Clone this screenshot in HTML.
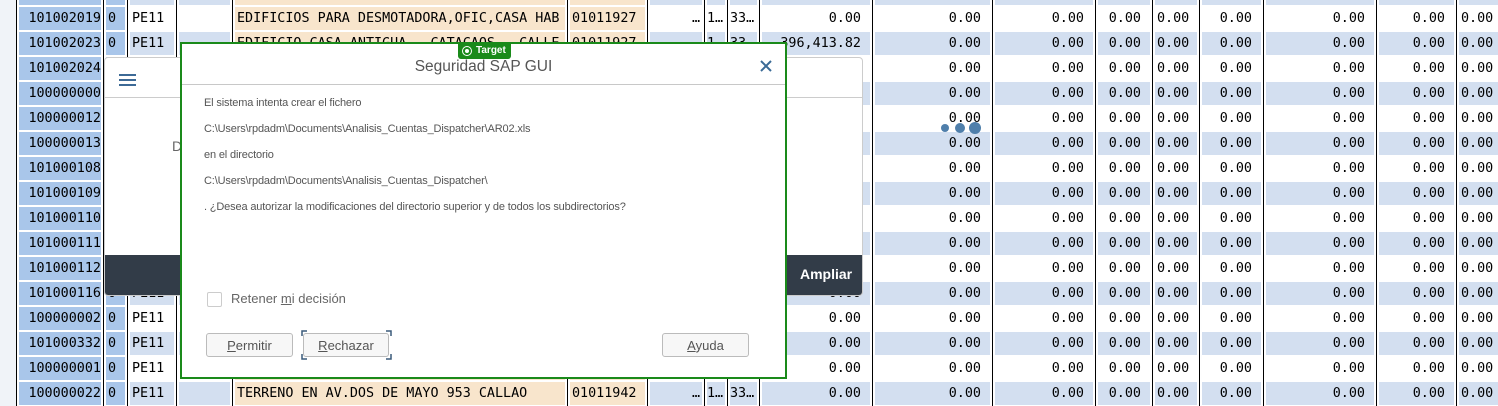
<!DOCTYPE html>
<html><head><meta charset="utf-8"><style>
body{margin:0;width:1498px;height:400px;overflow:hidden;background:#f0f3f8;position:relative;font-family:"DejaVu Sans Mono",monospace}
table{position:absolute;left:16px;top:-19px;width:1500px;border-collapse:separate;border-spacing:0;table-layout:fixed;font-size:13.4px;color:#000}
td{height:25px;padding:0 11px 0 4px;border-left:1px solid #000;box-shadow:inset 2px 0 #fff,inset -2px 0 #fff,inset 0 1px #fff,inset 0 -1px #fff;white-space:nowrap;overflow:hidden;text-align:right;background:#fff;box-sizing:border-box;line-height:25px}
tr.b td{background:#d3dff0}
td.i{background:#a9c6ea!important;text-align:right;padding-right:2px}
td.z{background:#a9c6ea!important;text-align:left;padding-left:4px}
td.o{background:#f8e5cc!important;text-align:left}
td.l{text-align:left;padding-right:2px}
td.d{padding-right:4px}
.abs{position:absolute}
.dlgt{font-family:"Liberation Sans",sans-serif;font-size:11px;color:#555;position:absolute;left:22px;letter-spacing:-0.15px;white-space:nowrap}
.btn{position:absolute;top:289px;height:24px;border:1px solid #bbb;border-radius:3px;background:#f7f7f7;font-family:"Liberation Sans",sans-serif;font-size:13px;color:#555;text-align:center;line-height:24px;box-sizing:border-box}
</style></head><body>
<table>
<colgroup><col style="width:87px"><col style="width:24px"><col style="width:49px"><col style="width:56px"><col style="width:335px"><col style="width:80px"><col style="width:57px"><col style="width:23px"><col style="width:32px"><col style="width:113px"><col style="width:120px"><col style="width:103px"><col style="width:57px"><col style="width:47px"><col style="width:64px"><col style="width:113px"><col style="width:80px"><col style="width:60px"></colgroup>
<tr class="b"><td class="i"></td><td class="z"></td><td class="l"></td><td></td><td class="o"></td><td class="o"></td><td></td><td></td><td></td><td></td><td></td><td></td><td></td><td></td><td></td><td></td><td></td><td></td></tr>
<tr><td class="i">101002019</td><td class="z">0</td><td class="l">PE11</td><td></td><td class="o">EDIFICIOS PARA DESMOTADORA,OFIC,CASA HAB</td><td class="o">01011927</td><td class="d">…</td><td class="l" style="padding:0 2px">1…</td><td class="l" style="padding:0 2px">33…</td><td>0.00</td><td>0.00</td><td>0.00</td><td>0.00</td><td class="l">0.00</td><td>0.00</td><td>0.00</td><td>0.00</td><td class="l">0.00</td></tr>
<tr class="b"><td class="i">101002023</td><td class="z">0</td><td class="l">PE11</td><td></td><td class="o">EDIFICIO CASA ANTIGUA - CATACAOS - CALLE</td><td class="o">01011927</td><td class="d">…</td><td class="l" style="padding:0 2px">1…</td><td class="l" style="padding:0 2px">33…</td><td>396,413.82</td><td>0.00</td><td>0.00</td><td>0.00</td><td class="l">0.00</td><td>0.00</td><td>0.00</td><td>0.00</td><td class="l">0.00</td></tr>
<tr><td class="i">101002024</td><td class="z">0</td><td class="l">PE11</td><td></td><td class="o"></td><td class="o"></td><td></td><td></td><td></td><td>0.00</td><td>0.00</td><td>0.00</td><td>0.00</td><td class="l">0.00</td><td>0.00</td><td>0.00</td><td>0.00</td><td class="l">0.00</td></tr>
<tr class="b"><td class="i">100000000</td><td class="z">0</td><td class="l">PE11</td><td></td><td class="o"></td><td class="o"></td><td></td><td></td><td></td><td>0.00</td><td>0.00</td><td>0.00</td><td>0.00</td><td class="l">0.00</td><td>0.00</td><td>0.00</td><td>0.00</td><td class="l">0.00</td></tr>
<tr><td class="i">100000012</td><td class="z">0</td><td class="l">PE11</td><td></td><td class="o"></td><td class="o"></td><td></td><td></td><td></td><td>0.00</td><td>0.00</td><td>0.00</td><td>0.00</td><td class="l">0.00</td><td>0.00</td><td>0.00</td><td>0.00</td><td class="l">0.00</td></tr>
<tr class="b"><td class="i">100000013</td><td class="z">0</td><td class="l">PE11</td><td></td><td class="o"></td><td class="o"></td><td></td><td></td><td></td><td>0.00</td><td>0.00</td><td>0.00</td><td>0.00</td><td class="l">0.00</td><td>0.00</td><td>0.00</td><td>0.00</td><td class="l">0.00</td></tr>
<tr><td class="i">101000108</td><td class="z">0</td><td class="l">PE11</td><td></td><td class="o"></td><td class="o"></td><td></td><td></td><td></td><td>0.00</td><td>0.00</td><td>0.00</td><td>0.00</td><td class="l">0.00</td><td>0.00</td><td>0.00</td><td>0.00</td><td class="l">0.00</td></tr>
<tr class="b"><td class="i">101000109</td><td class="z">0</td><td class="l">PE11</td><td></td><td class="o"></td><td class="o"></td><td></td><td></td><td></td><td>0.00</td><td>0.00</td><td>0.00</td><td>0.00</td><td class="l">0.00</td><td>0.00</td><td>0.00</td><td>0.00</td><td class="l">0.00</td></tr>
<tr><td class="i">101000110</td><td class="z">0</td><td class="l">PE11</td><td></td><td class="o"></td><td class="o"></td><td></td><td></td><td></td><td>0.00</td><td>0.00</td><td>0.00</td><td>0.00</td><td class="l">0.00</td><td>0.00</td><td>0.00</td><td>0.00</td><td class="l">0.00</td></tr>
<tr class="b"><td class="i">101000111</td><td class="z">0</td><td class="l">PE11</td><td></td><td class="o"></td><td class="o"></td><td></td><td></td><td></td><td>0.00</td><td>0.00</td><td>0.00</td><td>0.00</td><td class="l">0.00</td><td>0.00</td><td>0.00</td><td>0.00</td><td class="l">0.00</td></tr>
<tr><td class="i">101000112</td><td class="z">0</td><td class="l">PE11</td><td></td><td class="o"></td><td class="o"></td><td></td><td></td><td></td><td>0.00</td><td>0.00</td><td>0.00</td><td>0.00</td><td class="l">0.00</td><td>0.00</td><td>0.00</td><td>0.00</td><td class="l">0.00</td></tr>
<tr class="b"><td class="i">101000116</td><td class="z">0</td><td class="l">PE11</td><td></td><td class="o"></td><td class="o"></td><td></td><td></td><td></td><td>0.00</td><td>0.00</td><td>0.00</td><td>0.00</td><td class="l">0.00</td><td>0.00</td><td>0.00</td><td>0.00</td><td class="l">0.00</td></tr>
<tr><td class="i">100000002</td><td class="z">0</td><td class="l">PE11</td><td></td><td class="o"></td><td class="o"></td><td></td><td></td><td></td><td>0.00</td><td>0.00</td><td>0.00</td><td>0.00</td><td class="l">0.00</td><td>0.00</td><td>0.00</td><td>0.00</td><td class="l">0.00</td></tr>
<tr class="b"><td class="i">101000332</td><td class="z">0</td><td class="l">PE11</td><td></td><td class="o"></td><td class="o"></td><td></td><td></td><td></td><td>0.00</td><td>0.00</td><td>0.00</td><td>0.00</td><td class="l">0.00</td><td>0.00</td><td>0.00</td><td>0.00</td><td class="l">0.00</td></tr>
<tr><td class="i">100000001</td><td class="z">0</td><td class="l">PE11</td><td></td><td class="o"></td><td class="o"></td><td></td><td></td><td></td><td>0.00</td><td>0.00</td><td>0.00</td><td>0.00</td><td class="l">0.00</td><td>0.00</td><td>0.00</td><td>0.00</td><td class="l">0.00</td></tr>
<tr class="b"><td class="i">100000022</td><td class="z">0</td><td class="l">PE11</td><td></td><td class="o">TERRENO EN AV.DOS DE MAYO 953 CALLAO</td><td class="o">01011942</td><td class="d">…</td><td class="l" style="padding:0 2px">1…</td><td class="l" style="padding:0 2px">33…</td><td>0.00</td><td>0.00</td><td>0.00</td><td>0.00</td><td class="l">0.00</td><td>0.00</td><td>0.00</td><td>0.00</td><td class="l">0.00</td></tr>
</table>

<div class="abs" style="left:941px;top:124px;width:8px;height:8px;border-radius:50%;background:#4f7fab"></div>
<div class="abs" style="left:955px;top:123px;width:10px;height:10px;border-radius:50%;background:#4f7fab"></div>
<div class="abs" style="left:969px;top:122px;width:12px;height:12px;border-radius:50%;background:#4f7fab"></div>

<div class="abs" style="left:104px;top:57px;width:757px;height:237px;background:#fff;border:1px solid #ccc;border-radius:4px;overflow:hidden">
  <div class="abs" style="left:14px;top:16px;width:17px;height:2px;background:#3d6a96;box-shadow:0 5px #3d6a96,0 10px #3d6a96"></div>
  <div class="abs" style="left:0;top:39px;width:757px;height:1px;background:#ccc"></div>
  <div class="abs" style="left:67px;top:80px;font-family:'Liberation Sans',sans-serif;font-size:14px;color:#666">D</div>
  <div class="abs" style="left:0;top:197px;width:757px;height:40px;background:#323c48"></div>
  <div class="abs" style="left:695px;top:208px;font-family:'Liberation Sans',sans-serif;font-size:14px;font-weight:bold;color:#fff">Ampliar</div>
</div>

<div class="abs" style="left:180px;top:42px;width:603px;height:333px;background:#fff;border:2px solid #1a8a1a">
  <div class="abs" style="left:276px;top:-1px;width:53px;height:16px;background:#1a8a1a;border-radius:0 0 3px 3px;color:#fff;font-family:'Liberation Sans',sans-serif;font-size:10px;font-weight:bold;line-height:16px">
    <span style="position:absolute;left:4px;top:3px;width:8px;height:8px;border:1px solid #fff;border-radius:50%"></span>
    <span style="position:absolute;left:7px;top:6px;width:4px;height:4px;background:#fff;border-radius:50%"></span>
    <span style="position:absolute;left:18px">Target</span>
  </div>
  <div class="abs" style="left:0;top:14px;width:603px;text-align:center;font-family:'Liberation Sans',sans-serif;font-size:15.5px;color:#555">Seguridad SAP GUI</div>
  <svg class="abs" style="left:578px;top:16px" width="12" height="12" viewBox="0 0 12 12"><path d="M1 1L11 11M11 1L1 11" stroke="#3a6a96" stroke-width="2"/></svg>
  <div class="abs" style="left:0;top:40px;width:603px;height:1px;background:#c8c8c8"></div>
  <div class="dlgt" style="top:53px">El sistema intenta crear el fichero</div>
  <div class="dlgt" style="top:79px">C:\Users\rpdadm\Documents\Analisis_Cuentas_Dispatcher\AR02.xls</div>
  <div class="dlgt" style="top:105px">en el directorio</div>
  <div class="dlgt" style="top:131px">C:\Users\rpdadm\Documents\Analisis_Cuentas_Dispatcher\</div>
  <div class="dlgt" style="top:157px">. ¿Desea autorizar la modificaciones del directorio superior y de todos los subdirectorios?</div>
  <div class="abs" style="left:25px;top:248px;width:13px;height:13px;border:1px solid #ccc;border-radius:2px"></div>
  <div class="abs" style="left:49px;top:247px;font-family:'Liberation Sans',sans-serif;font-size:13px;color:#666">Retener <u>m</u>i decisión</div>
  <div class="btn" style="left:24px;width:87px"><u>P</u>ermitir</div>
  <div class="btn" style="left:121px;width:86px"><u>R</u>echazar</div>
  <svg class="abs" style="left:119px;top:286px" width="91" height="30"><path d="M1 6V1H6M85 1H90V6M90 24V29H85M6 29H1V24" fill="none" stroke="#3a5a7a" stroke-width="1.5"/></svg>
  <div class="btn" style="left:480px;width:87px"><u>A</u>yuda</div>
</div>
</body></html>
